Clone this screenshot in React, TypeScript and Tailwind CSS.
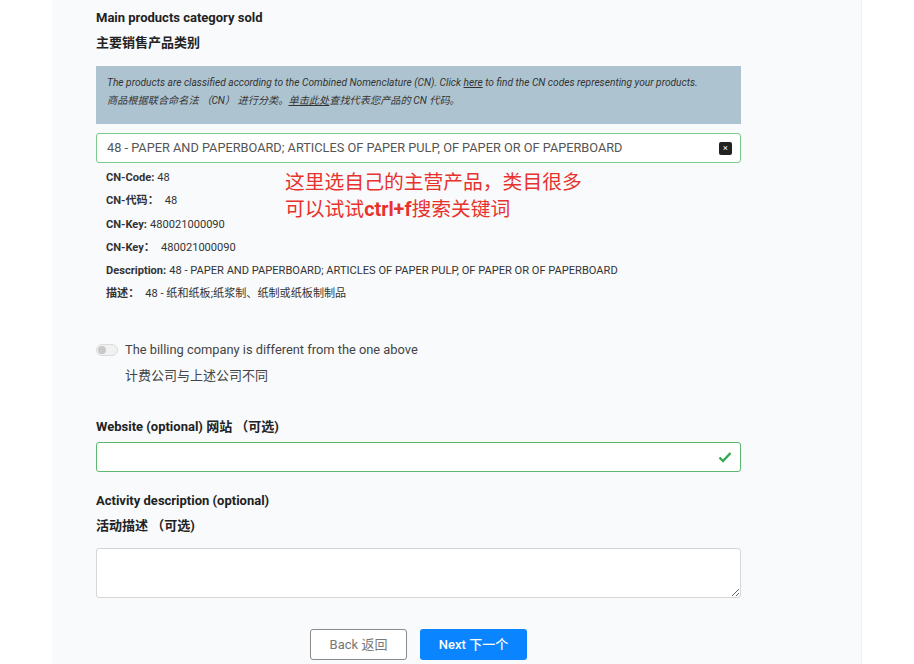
import React from 'react'

const font = { fontFamily: 'Roboto, "Noto Sans CJK SC", sans-serif' }

function DetailRow({ label, value, gap = false }: { label: string; value: string; gap?: boolean }) {
  return (
    <div className="flex h-[23.2px] items-center text-[11.1px] text-[#333]">
      <span className="font-bold">{label}</span>
      <span className={gap ? 'ml-[6px]' : 'ml-[3px]'}>{value}</span>
    </div>
  )
}

export default function App() {
  return (
    <div className="min-h-[664px] bg-white" style={font}>
      <div className="ml-[52px] w-[810px] border-r border-[#eef0f3] bg-[#f8fafc] pb-[4px]">
        <div className="w-[645px] pl-[44px] pt-[10px]" style={{ boxSizing: 'content-box' }}>
          <div className="text-[13px] font-bold leading-[16px] text-[#222]">Main products category sold</div>
          <div className="mt-[9px] text-[13px] font-bold leading-[16px] text-[#222]">主要销售产品类别</div>

          <div className="mt-[15px] h-[58px] bg-[#adc3d0] px-[11px] pt-[8px] text-[10.2px] italic leading-[18px] text-[#333]">
            <div>
              The products are classified according to the Combined Nomenclature (CN). Click{' '}
              <span className="underline">here</span> to find the CN codes representing your products.
            </div>
            <div>
              商品根据联合命名法 （CN） 进行分类。<span className="underline">单击此处</span>查找代表您产品的 CN 代码。
            </div>
          </div>

          <div className="mt-[9px] flex h-[30px] items-center justify-between rounded-[3px] border border-[#7cc98a] bg-white pl-[10px] pr-[8px]">
            <span className="text-[12.75px] text-[#555]">
              48 - PAPER AND PAPERBOARD; ARTICLES OF PAPER PULP, OF PAPER OR OF PAPERBOARD
            </span>
            <span className="flex h-[13px] w-[13px] items-center justify-center rounded-[2px] bg-[#222] text-[9px] leading-none text-white">
              ×
            </span>
          </div>

          <div className="relative mt-[4px] pl-[10px]">
            <DetailRow label="CN-Code:" value="48" />
            <DetailRow label="CN-代码：" value="48" gap />
            <DetailRow label="CN-Key:" value="480021000090" />
            <DetailRow label="CN-Key：" value="480021000090" gap />
            <DetailRow label="Description:" value="48 - PAPER AND PAPERBOARD; ARTICLES OF PAPER PULP, OF PAPER OR OF PAPERBOARD" />
            <DetailRow label="描述：" value="48 - 纸和纸板;纸浆制、纸制或纸板制制品" gap />
            <div className="absolute left-[189px] top-[2px] text-[19.8px] leading-[27px] text-[#e8322d]">
              <div>这里选自己的主营产品，类目很多</div>
              <div>
                可以试试<span className="font-bold">ctrl+f</span>搜索关键词
              </div>
            </div>
          </div>

          <div className="mt-[36px] flex items-center">
            <span className="relative inline-block h-[12px] w-[22px] rounded-full border border-[#dcdcdc] bg-[#f1f1f1]">
              <span className="absolute left-[1px] top-[1px] h-[8px] w-[8px] rounded-full bg-[#c8c8c8]" />
            </span>
            <span className="ml-[7px] text-[12.85px] leading-[16px] text-[#444]">The billing company is different from the one above</span>
          </div>
          <div className="ml-[29px] mt-[10px] text-[13px] leading-[16px] text-[#444]">计费公司与上述公司不同</div>

          <div className="mt-[35px] text-[13px] font-bold leading-[16px] text-[#222]">Website (optional) 网站 （可选)</div>
          <div className="mt-[7px] flex h-[30px] items-center justify-end rounded-[3px] border border-[#5cb86c] bg-white pr-[8px]">
            <svg width="14" height="12" viewBox="0 0 14 12">
              <path d="M1.5 6.5 L5 10 L12.5 2" fill="none" stroke="#34a853" strokeWidth="2.4" />
            </svg>
          </div>

          <div className="mt-[21px] text-[13px] font-bold leading-[16px] text-[#222]">Activity description (optional)</div>
          <div className="mt-[9px] text-[13px] font-bold leading-[16px] text-[#222]">活动描述 （可选)</div>
          <textarea className="mt-[14px] block h-[50px] w-full resize-y rounded-[3px] border border-[#d6d6d6] bg-white" />

          <div className="mt-[31px] flex justify-center gap-[13px]">
            <button className="h-[31px] w-[97px] rounded-[3px] border border-[#8a8a8a] bg-white text-[13px] text-[#777]">
              Back 返回
            </button>
            <button className="h-[31px] w-[107px] rounded-[3px] bg-[#0a84ff] text-[13px] font-medium text-white">
              Next 下一个
            </button>
          </div>
        </div>
      </div>
    </div>
  )
}
